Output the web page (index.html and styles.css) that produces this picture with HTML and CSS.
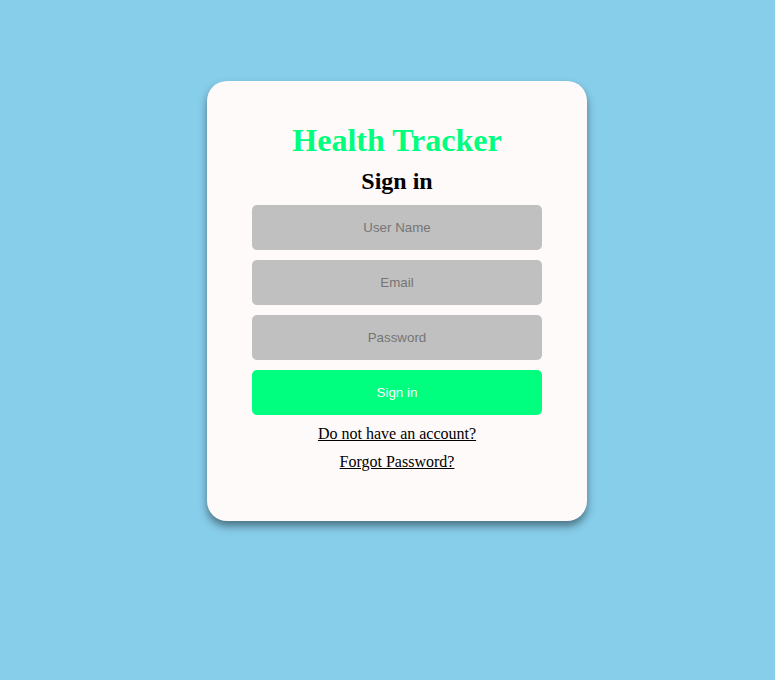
FILE: index.html
```html
<!DOCTYPE html>
<html>
<head>
<meta charset="utf-8">
<title>Health Tracker</title>
<link rel="stylesheet" href="styles.css">
</head>
<body>
<div class="page">
  <div class="card">
    <h1 class="title">Health Tracker</h1>
    <h2 class="subtitle">Sign in</h2>
    <form class="form">
      <input class="field" type="text" placeholder="User Name">
      <input class="field" type="email" placeholder="Email">
      <input class="field" type="password" placeholder="Password">
      <button class="btn" type="button">Sign in</button>
    </form>
    <div class="links">
      <a class="link" href="#">Do not have an account?</a>
      <a class="link" href="#">Forgot Password?</a>
    </div>
  </div>
</div>
</body>
</html>
```
FILE: styles.css
```css
html, body {
  margin: 0;
  padding: 0;
}
body {
  background: #87ceeb;
  font-family: "Liberation Serif", "Times New Roman", serif;
  min-height: 680px;
}
.page {
  display: flex;
  justify-content: center;
  padding: 81px 0 0 19px;
}
.card {
  width: 380px;
  box-sizing: border-box;
  padding: 41px 45px 50px;
  background: #fffafa;
  border-radius: 20px;
  box-shadow: 0 5px 8px rgba(0, 0, 0, 0.45);
  display: flex;
  flex-direction: column;
  align-items: center;
}
.title {
  margin: 0;
  font-size: 32px;
  font-weight: bold;
  color: #00ff7f;
  line-height: 37px;
}
.subtitle {
  margin: 8px 0 10px;
  font-size: 24px;
  font-weight: bold;
  color: #000;
  line-height: 28px;
}
.form {
  width: 290px;
  display: flex;
  flex-direction: column;
  gap: 10px;
}
.field, .btn {
  height: 45px;
  box-sizing: border-box;
  border: none;
  border-radius: 5px;
  font-family: "Liberation Sans", Arial, sans-serif;
  font-size: 13.333px;
  text-align: center;
  outline: none;
}
.field {
  background: #c0c0c0;
  color: #333;
}
.field::placeholder {
  color: #757575;
}
.btn {
  background: #00ff7f;
  color: #fff;
}
.links {
  margin-top: 9px;
  display: flex;
  flex-direction: column;
  align-items: center;
  gap: 9px;
}
.link {
  font-size: 16px;
  line-height: 19px;
  color: #000;
  text-decoration: underline;
}
```
